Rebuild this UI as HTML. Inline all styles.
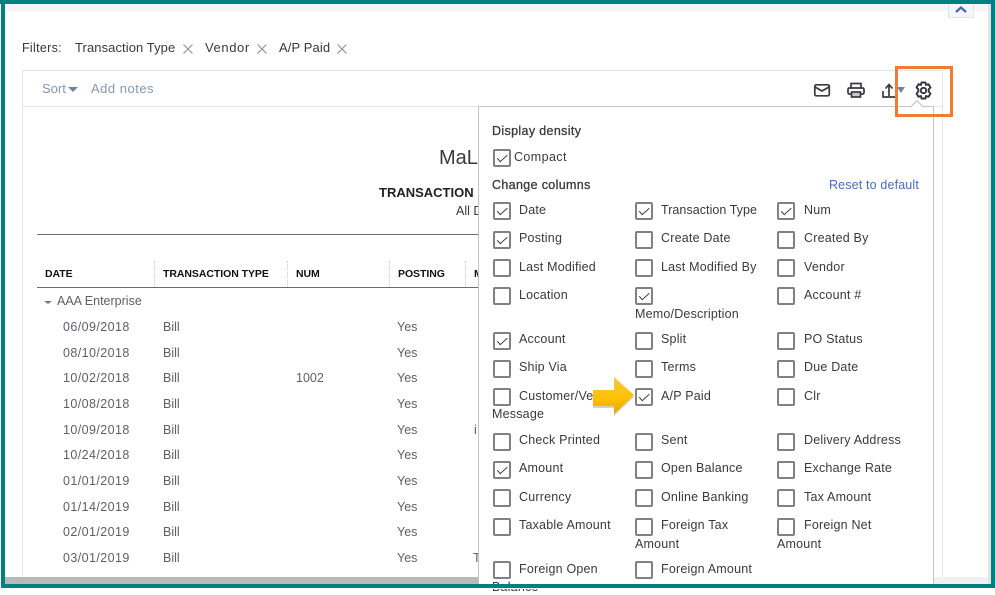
<!DOCTYPE html>
<html><head><meta charset="utf-8">
<style>
html,body{margin:0;padding:0;background:#fff;}
body{width:995px;height:589px;position:relative;overflow:hidden;font-family:"Liberation Sans",sans-serif;color:#393a3d;font-size:12.5px;}
.a{position:absolute;white-space:nowrap;line-height:16px;letter-spacing:.2px;}
.b{position:absolute;}
.cb{position:absolute;width:13.500px;height:13.500px;border:2px solid #808185;border-radius:2px;background:#fff;}
.cb.c::after{content:"";position:absolute;left:4.500px;top:.5px;width:3.500px;height:8.500px;border:solid #393a3d;border-width:0 1px 1px 0;transform:rotate(48deg);}
.h{font-weight:bold;font-size:10.5px;color:#111;letter-spacing:-.06px;}
.g{color:#5d6066;letter-spacing:0;}
.d{letter-spacing:.42px;}
</style></head><body>
<div class="b" style="left:5px;top:4px;width:983px;height:7px;background:#f4f5f8"></div>
<div class="b" style="left:948px;top:4px;width:26px;height:14px;background:#f4f6fa;border:1px solid #e3e5ea;border-top:0;box-sizing:border-box"></div>
<svg class="b" style="left:955px;top:5px" width="12" height="8"><path d="M1 7L6 2.500L11 7" fill="none" stroke="#4a66ad" stroke-width="2.200"/></svg>
<div class="b" style="left:988px;top:4px;width:3px;height:580px;background:#e4e4e4"></div>

<div class="a" style="left:22px;top:40px;letter-spacing:.3px">Filters:</div>
<div class="a" style="left:75px;top:40px;font-size:13px;letter-spacing:.08px">Transaction Type</div>
<div class="a" style="left:205px;top:40px;font-size:13px;letter-spacing:.6px">Vendor</div>
<div class="a" style="left:279px;top:40px;font-size:13px;letter-spacing:.1px">A/P Paid</div>
<svg class="b" style="left:182px;top:43px" width="12" height="12"><path d="M1.500 1.500L10.500 10.500M10.500 1.500L1.500 10.500" stroke="#8d9096" stroke-width="1.100"/></svg>
<svg class="b" style="left:256px;top:43px" width="12" height="12"><path d="M1.500 1.500L10.500 10.500M10.500 1.500L1.500 10.500" stroke="#8d9096" stroke-width="1.100"/></svg>
<svg class="b" style="left:336px;top:43px" width="12" height="12"><path d="M1.500 1.500L10.500 10.500M10.500 1.500L1.500 10.500" stroke="#8d9096" stroke-width="1.100"/></svg>

<div class="b" style="left:22px;top:70px;width:921px;height:514px;border:1px solid #e3e5ea;border-bottom:0;box-sizing:border-box"></div>
<div class="b" style="left:23px;top:106px;width:920px;height:1px;background:#e3e5ea"></div>
<div class="a" style="left:42px;top:81px;color:#8497b4;font-size:13px;letter-spacing:0">Sort</div>
<div class="b" style="left:68px;top:87px;border:5px solid transparent;border-top:5px solid #6d84a8;border-bottom:0"></div>
<div class="a" style="left:91px;top:81px;color:#8497b4;font-size:13px;letter-spacing:.5px">Add notes</div>

<svg class="b" style="left:813px;top:83px" width="18" height="15" fill="none" stroke="#393a3d" stroke-width="1.700"><rect x="1.800" y="1.800" width="14.500" height="11" rx="1.500"/><path d="M2 4L9 8L16 4"/></svg>
<svg class="b" style="left:846px;top:81px" width="20" height="18" fill="none" stroke="#393a3d" stroke-width="1.700"><path d="M5 7V2.500H15V7M5 13H3.500Q2 13 2 11.500V8.500Q2 7 3.500 7H16.500Q18 7 18 8.500V11.500Q18 13 16.500 13H15"/><rect x="5.500" y="11" width="9" height="5" fill="#c9cacc"/></svg>
<svg class="b" style="left:881px;top:82px" width="16" height="18" fill="none" stroke="#393a3d" stroke-width="1.700"><path d="M2 9V15H14.500M8 14V3M4.500 6.500L8 2.500L11.500 6.500"/></svg>
<div class="b" style="left:897px;top:87px;border:4.500px solid transparent;border-top:6px solid #6d84a8;border-bottom:0"></div>
<svg class="b" style="left:914px;top:81px" width="19" height="19" fill="none" stroke="#33353a" stroke-width="1.900"><path d="M7.500 1.500H11.500L12 4L14.500 3.200L16.500 6.500L14.700 8.300V10.700L16.500 12.500L14.500 15.800L12 15L11.500 17.500H7.500L7 15L4.500 15.800L2.500 12.500L4.300 10.700V8.300L2.500 6.500L4.500 3.200L7 4Z" stroke-linejoin="round"/><circle cx="9.500" cy="9.500" r="2.700"/></svg>

<div class="a" style="left:439px;top:146px;font-size:20px;line-height:24px;letter-spacing:0">MaL</div>
<div class="a" style="left:379px;top:185px;font-weight:bold;font-size:13px;color:#222;letter-spacing:0">TRANSACTION</div>
<div class="a" style="left:456px;top:203px;letter-spacing:0">All D</div>
<div class="b" style="left:37px;top:234px;width:442px;height:1px;background:#6b6c72"></div>
<div class="a h" style="left:45px;top:266px">DATE</div>
<div class="a h" style="left:163px;top:266px">TRANSACTION TYPE</div>
<div class="a h" style="left:296px;top:266px">NUM</div>
<div class="a h" style="left:398px;top:266px">POSTING</div>
<div class="a h" style="left:474px;top:266px">M</div>
<div class="b" style="left:154px;top:261px;height:26px;border-left:1px dotted #ccc"></div>
<div class="b" style="left:287px;top:261px;height:26px;border-left:1px dotted #ccc"></div>
<div class="b" style="left:389px;top:261px;height:26px;border-left:1px dotted #ccc"></div>
<div class="b" style="left:465px;top:261px;height:26px;border-left:1px dotted #ccc"></div>
<div class="b" style="left:37px;top:287px;width:442px;height:1px;background:#6b6c72"></div>
<div class="b" style="left:44px;top:301px;border:4px solid transparent;border-top:3px solid #777;border-bottom:0"></div>
<div class="a g" style="left:57px;top:293px">AAA Enterprise</div>

<div class="a g d" style="left:63px;top:319px">06/09/2018</div><div class="a g" style="left:163px;top:319px">Bill</div><div class="a g" style="left:397px;top:319px">Yes</div>
<div class="a g d" style="left:63px;top:345px">08/10/2018</div><div class="a g" style="left:163px;top:345px">Bill</div><div class="a g" style="left:397px;top:345px">Yes</div>
<div class="a g d" style="left:63px;top:370px">10/02/2018</div><div class="a g" style="left:163px;top:370px">Bill</div><div class="a g" style="left:296px;top:370px">1002</div><div class="a g" style="left:397px;top:370px">Yes</div>
<div class="a g d" style="left:63px;top:396px">10/08/2018</div><div class="a g" style="left:163px;top:396px">Bill</div><div class="a g" style="left:397px;top:396px">Yes</div>
<div class="a g d" style="left:63px;top:422px">10/09/2018</div><div class="a g" style="left:163px;top:422px">Bill</div><div class="a g" style="left:397px;top:422px">Yes</div><div class="a g" style="left:474px;top:422px">i</div>
<div class="a g d" style="left:63px;top:447px">10/24/2018</div><div class="a g" style="left:163px;top:447px">Bill</div><div class="a g" style="left:397px;top:447px">Yes</div>
<div class="a g d" style="left:63px;top:473px">01/01/2019</div><div class="a g" style="left:163px;top:473px">Bill</div><div class="a g" style="left:397px;top:473px">Yes</div>
<div class="a g d" style="left:63px;top:499px">01/14/2019</div><div class="a g" style="left:163px;top:499px">Bill</div><div class="a g" style="left:397px;top:499px">Yes</div>
<div class="a g d" style="left:63px;top:524px">02/01/2019</div><div class="a g" style="left:163px;top:524px">Bill</div><div class="a g" style="left:397px;top:524px">Yes</div>
<div class="a g d" style="left:63px;top:550px">03/01/2019</div><div class="a g" style="left:163px;top:550px">Bill</div><div class="a g" style="left:397px;top:550px">Yes</div><div class="a g" style="left:473px;top:550px">T</div>

<div class="b" style="left:5px;top:577px;width:474px;height:7px;background:#b9b9b9"></div>
<div class="b" style="left:933px;top:577px;width:55px;height:7px;background:#f1f1f1"></div>

<div class="b" style="left:478px;top:106px;width:456px;height:478px;background:#fff;border:1px solid #c4c4c4;border-bottom:0;box-sizing:border-box"></div>
<div class="b" style="left:912px;top:102px;width:9px;height:9px;background:#fff;border:1px solid #c4c4c4;border-width:1px 0 0 1px;transform:rotate(45deg)"></div>

<div class="a" style="left:492px;top:123px;letter-spacing:.35px;-webkit-text-stroke:.3px #393a3d">Display density</div>
<div class="cb c" style="left:493px;top:149px"></div><div class="a" style="left:514px;top:149px;letter-spacing:.4px">Compact</div>
<div class="a" style="left:492px;top:177px;letter-spacing:.35px;-webkit-text-stroke:.3px #393a3d">Change columns</div>
<div class="a" style="left:829px;top:177px;color:#4a6cc0;letter-spacing:.15px">Reset to default</div>

<div class="cb c" style="left:493px;top:202px"></div><div class="a" style="left:519px;top:202px">Date</div>
<div class="cb c" style="left:635px;top:202px"></div><div class="a" style="left:661px;top:202px;letter-spacing:.05px">Transaction Type</div>
<div class="cb c" style="left:777px;top:202px"></div><div class="a" style="left:804px;top:202px">Num</div>

<div class="cb c" style="left:493px;top:231px"></div><div class="a" style="left:519px;top:230px">Posting</div>
<div class="cb" style="left:635px;top:231px"></div><div class="a" style="left:661px;top:230px">Create Date</div>
<div class="cb" style="left:777px;top:231px"></div><div class="a" style="left:804px;top:230px">Created By</div>

<div class="cb" style="left:493px;top:259px"></div><div class="a" style="left:519px;top:259px">Last Modified</div>
<div class="cb" style="left:635px;top:259px"></div><div class="a" style="left:661px;top:259px">Last Modified By</div>
<div class="cb" style="left:777px;top:259px"></div><div class="a" style="left:804px;top:259px">Vendor</div>

<div class="cb" style="left:493px;top:287px"></div><div class="a" style="left:519px;top:287px">Location</div>
<div class="cb c" style="left:635px;top:287px"></div><div class="a" style="left:635px;top:306px">Memo/Description</div>
<div class="cb" style="left:777px;top:287px"></div><div class="a" style="left:804px;top:287px">Account #</div>

<div class="cb c" style="left:493px;top:332px"></div><div class="a" style="left:519px;top:331px">Account</div>
<div class="cb" style="left:635px;top:332px"></div><div class="a" style="left:661px;top:331px">Split</div>
<div class="cb" style="left:777px;top:332px"></div><div class="a" style="left:804px;top:331px">PO Status</div>

<div class="cb" style="left:493px;top:360px"></div><div class="a" style="left:519px;top:359px">Ship Via</div>
<div class="cb" style="left:635px;top:360px"></div><div class="a" style="left:661px;top:359px">Terms</div>
<div class="cb" style="left:777px;top:360px"></div><div class="a" style="left:804px;top:359px">Due Date</div>

<div class="cb" style="left:493px;top:388px"></div><div class="a" style="left:519px;top:388px">Customer/Vendor</div><div class="a" style="left:492px;top:406px">Message</div>
<div class="cb c" style="left:635px;top:388px"></div><div class="a" style="left:661px;top:388px">A/P Paid</div>
<div class="cb" style="left:777px;top:388px"></div><div class="a" style="left:804px;top:388px">Clr</div>

<svg class="b" style="left:590px;top:375px" width="48" height="44"><defs><linearGradient id="y" x1="0" y1="0" x2="0" y2="1"><stop offset="0" stop-color="#f4c94a"/><stop offset=".6" stop-color="#ffc000"/><stop offset="1" stop-color="#e0a800"/></linearGradient></defs><path d="M3 15H24V2L44 20L24 39V31H3Z" fill="#a89a70" opacity=".45" transform="translate(0,2)"/><path d="M3 15H24V2L44 20L24 39V31H3Z" fill="url(#y)"/></svg>

<div class="cb" style="left:493px;top:433px"></div><div class="a" style="left:519px;top:432px">Check Printed</div>
<div class="cb" style="left:635px;top:433px"></div><div class="a" style="left:661px;top:432px">Sent</div>
<div class="cb" style="left:777px;top:433px"></div><div class="a" style="left:804px;top:432px">Delivery Address</div>

<div class="cb c" style="left:493px;top:461px"></div><div class="a" style="left:519px;top:460px">Amount</div>
<div class="cb" style="left:635px;top:461px"></div><div class="a" style="left:661px;top:460px">Open Balance</div>
<div class="cb" style="left:777px;top:461px"></div><div class="a" style="left:804px;top:460px">Exchange Rate</div>

<div class="cb" style="left:493px;top:489px"></div><div class="a" style="left:519px;top:489px">Currency</div>
<div class="cb" style="left:635px;top:489px"></div><div class="a" style="left:661px;top:489px">Online Banking</div>
<div class="cb" style="left:777px;top:489px"></div><div class="a" style="left:804px;top:489px">Tax Amount</div>

<div class="cb" style="left:493px;top:518px"></div><div class="a" style="left:519px;top:517px">Taxable Amount</div>
<div class="cb" style="left:635px;top:518px"></div><div class="a" style="left:661px;top:517px">Foreign Tax</div><div class="a" style="left:635px;top:536px">Amount</div>
<div class="cb" style="left:777px;top:518px"></div><div class="a" style="left:804px;top:517px">Foreign Net</div><div class="a" style="left:777px;top:536px">Amount</div>

<div class="cb" style="left:493px;top:561px"></div><div class="a" style="left:519px;top:561px">Foreign Open</div><div class="a" style="left:492px;top:579px">Balance</div>
<div class="cb" style="left:635px;top:561px"></div><div class="a" style="left:661px;top:561px">Foreign Amount</div>

<div class="b" style="left:895px;top:66px;width:58px;height:51px;border:3px solid #ef7d31;box-sizing:border-box"></div>

<div class="b" style="left:0;top:0;width:995px;height:4px;background:#008080"></div>
<div class="b" style="left:1px;top:0;width:4px;height:588px;background:#008080"></div>
<div class="b" style="left:991px;top:0;width:4px;height:588px;background:#008080"></div>
<div class="b" style="left:1px;top:584px;width:994px;height:4px;background:#008080"></div>
<div class="b" style="left:0;top:588px;width:995px;height:1px;background:#fff"></div>
</body></html>
